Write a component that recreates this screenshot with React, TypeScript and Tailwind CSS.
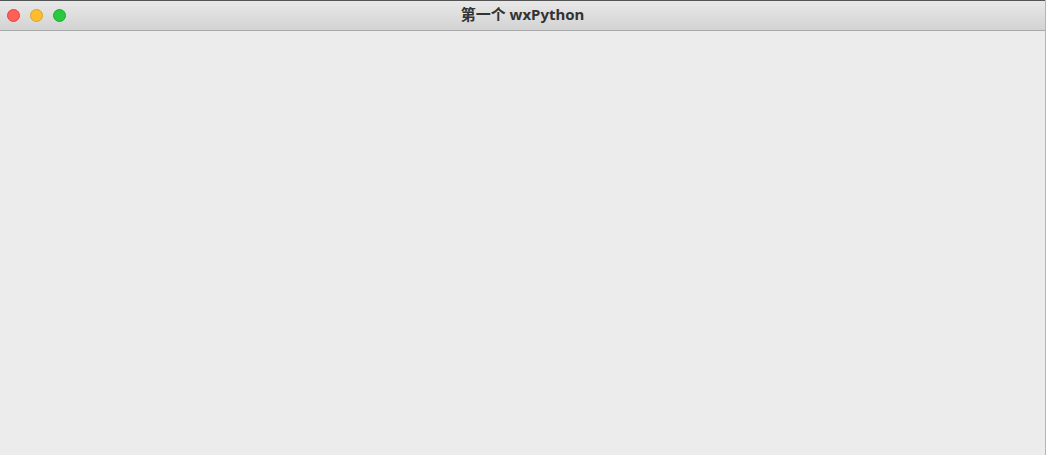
export default function App() {
  return (
    <div className="w-[1046px] h-[455px] flex flex-col bg-[#ececec] border-r border-[#b5b5b5] overflow-hidden" style={{ fontFamily: '"Noto Sans", "Noto Sans CJK SC", sans-serif' }}>
      <div className="h-[31px] flex items-center relative bg-gradient-to-b from-[#e8e8e8] to-[#d3d3d3] border-t border-[#555] border-b border-b-[#a9a9a9] shrink-0">
        <div className="flex items-center gap-[10px] pl-[7px]">
          <div className="w-[13px] h-[13px] rounded-full bg-[#fe5f57] border border-[#e0443e]" />
          <div className="w-[13px] h-[13px] rounded-full bg-[#febc2e] border border-[#dea123]" />
          <div className="w-[13px] h-[13px] rounded-full bg-[#28c840] border border-[#1aab29]" />
        </div>
        <div className="absolute inset-0 flex items-center justify-center text-[15px] font-bold text-[#333] pb-[3px]">
          第一个 wxPython
        </div>
      </div>
      <div className="flex-1 bg-[#ececec]" />
    </div>
  );
}
